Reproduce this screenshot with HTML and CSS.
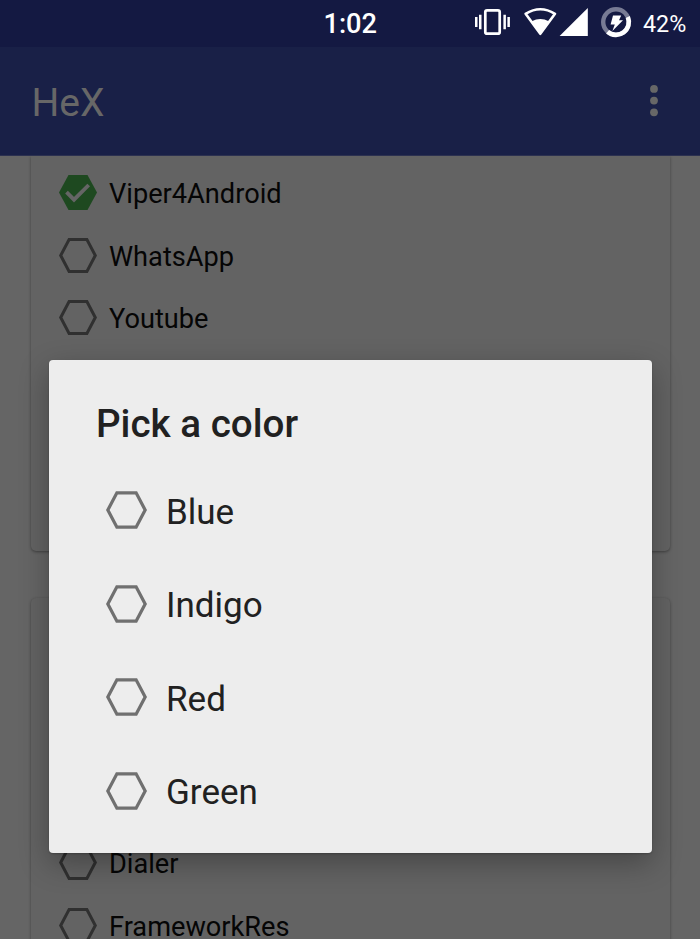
FILE: index.html
```html
<!DOCTYPE html>
<html lang="en">
<head>
<meta charset="utf-8">
<title>HeX</title>
<link rel="stylesheet" href="styles.css">
</head>
<body>
<svg class="defs" aria-hidden="true">
  <symbol id="hex" viewBox="0 0 38 35"><path d="M10.1 1.6H27.9L36.3 17.5L27.9 33.4H10.1L1.7 17.5Z" fill="none" stroke="currentColor" stroke-width="3"/></symbol>
  <symbol id="hex-on" viewBox="0 0 38 35"><path d="M9.5 0H28.5L38 17.5L28.5 35H9.5L0 17.5Z" fill="#1e4920"/><path d="M7.5 17.2L15 24.7L29.7 10" fill="none" stroke="#656565" stroke-width="3.8"/></symbol>
</svg>
<div class="screen">
  <header class="status">
    <span class="time">1:02</span>
    <div class="indicators">
      <svg width="171" height="46" viewBox="0 0 171 46" fill="#fff">
        <rect x="13.3" y="10.3" width="14.4" height="23.4" rx="1.8" fill="none" stroke="#fff" stroke-width="2.7"/>
        <path d="M3 17h2.5v10H3zM7 14.8h2.5v14.4H7zM31.4 14.8h2.5v14.4h-2.5zM35.4 17h2.5v10h-2.5z"/>
        <path d="M53.6 13.8Q68.3 4.6 83 13.8L68.3 33.8Z" fill="none" stroke="#fff" stroke-width="2.6" stroke-linejoin="round"/>
        <path d="M59.8 21.3Q68.3 16.8 76.8 21.3L68.3 34.8Z"/>
        <path d="M115.8 8V36H87.6Z"/>
        <circle cx="144" cy="22" r="12.8" fill="none" stroke="#787b94" stroke-width="4.4"/>
        <path d="M155.8 17A12.8 12.8 0 0 1 135.6 31.7" fill="none" stroke="#fff" stroke-width="4.6"/>
        <path d="M141 15.6H149.2L147 20.2H151L140.4 31L142.8 24.6H138.6Z"/>
      </svg>
      <span class="battery">42%</span>
    </div>
  </header>
  <div class="toolbar">
    <h1>HeX</h1>
    <svg class="more" width="8" height="32" viewBox="0 0 8 32"><circle cx="4" cy="3.9" r="3.9"/><circle cx="4" cy="15.6" r="3.9"/><circle cx="4" cy="27.3" r="3.9"/></svg>
  </div>
  <main class="content">
    <section class="card first">
      <div class="row"><svg class="check"><use href="#hex-on"/></svg><span>Viper4Android</span></div>
      <div class="row"><svg class="check"><use href="#hex"/></svg><span>WhatsApp</span></div>
      <div class="row"><svg class="check"><use href="#hex"/></svg><span>Youtube</span></div>
    </section>
    <section class="card second">
      <div class="row"><svg class="check"><use href="#hex"/></svg><span>Dialer</span></div>
      <div class="row"><svg class="check"><use href="#hex"/></svg><span>FrameworkRes</span></div>
    </section>
  </main>
  <div class="dialog" role="dialog">
    <h2>Pick a color</h2>
    <div class="option"><svg class="check"><use href="#hex"/></svg><span>Blue</span></div>
    <div class="option"><svg class="check"><use href="#hex"/></svg><span>Indigo</span></div>
    <div class="option"><svg class="check"><use href="#hex"/></svg><span>Red</span></div>
    <div class="option"><svg class="check"><use href="#hex"/></svg><span>Green</span></div>
  </div>
</div>
</body>
</html>
```
FILE: styles.css
```css
* { box-sizing: border-box; }
body { margin: 0; font-family: Roboto, sans-serif; }
h1, h2 { margin: 0; }
.defs { position: absolute; width: 0; height: 0; }
.screen { position: relative; width: 700px; height: 939px; overflow: hidden; background: #656565; display: flex; flex-direction: column; }
.status { height: 47px; flex: none; background: #141942; color: #fff; display: flex; justify-content: space-between; padding-left: 323.5px; }
.time { font-size: 27.2px; font-weight: 500; line-height: 48px; }
.indicators { display: flex; width: 228px; }
.indicators svg { flex: none; }
.battery { font-size: 23.3px; line-height: 48px; }
.toolbar { height: 109px; flex: none; background: #192047; border-bottom: 1px solid #2c3150; display: flex; align-items: center; justify-content: space-between; padding: 0 42px 0 31.5px; }
.toolbar h1 { font-size: 39px; font-weight: 400; line-height: 46px; padding-top: 4px; color: #676767; }
.more { fill: #676767; }
.content { flex: 1; min-height: 0; padding: 0 30px 0 31px; }
.card { background: #636363; box-shadow: 0 1px 3px rgba(0,0,0,.38); padding: 0 28px; }
.first { height: 395px; border-radius: 0 0 5px 5px; padding-top: 5.6px; clip-path: inset(0 -6px -6px -6px); }
.second { margin-top: 47px; height: 400px; border-radius: 5px; padding-top: 233.6px; }
.row { height: 62.3px; display: flex; align-items: center; gap: 12px; font-size: 27.2px; color: #050505; }
.row .check { width: 38px; height: 35px; color: #303030; flex: none; }
.row span { padding-top: 3px; line-height: 32px; }
.dialog { position: absolute; left: 49px; top: 360px; width: 603px; height: 493px; border-radius: 4px; background: #ededed; color: #212121; padding: 41px 47px 0; box-shadow: 0 10px 30px rgba(0,0,0,.3), 0 1px 2px rgba(0,0,0,.2); }
.dialog h2 { font-size: 38.6px; font-weight: 500; line-height: 46px; margin-bottom: 16.3px; }
.option { height: 93.5px; display: flex; align-items: center; gap: 19px; padding-left: 10px; font-size: 35px; }
.option .check { width: 41px; height: 38px; color: #707070; flex: none; }
.option span { padding-top: 5px; line-height: 42px; }
```
